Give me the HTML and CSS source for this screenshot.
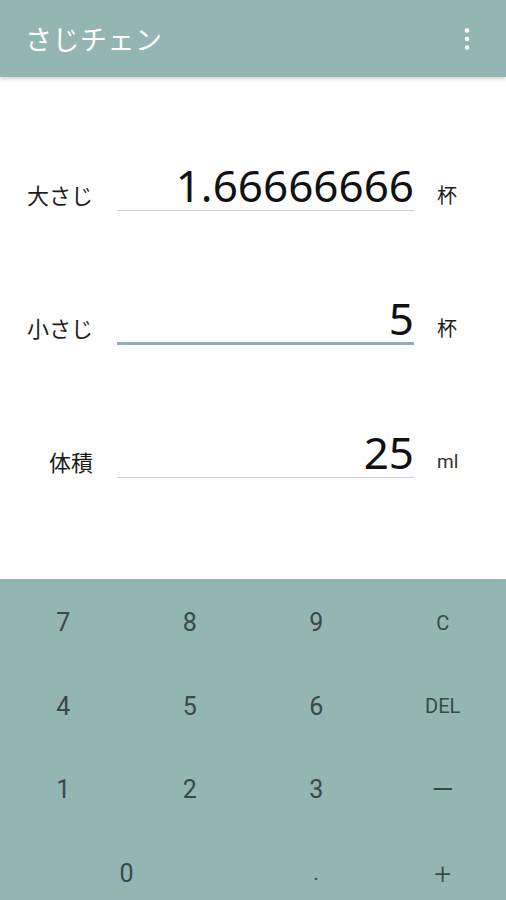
FILE: index.html
```html
<!DOCTYPE html>
<html lang="ja">
<head>
<meta charset="utf-8">
<title>さじチェン</title>
<link rel="stylesheet" href="styles.css">
</head>
<body>
<div class="app">
  <header class="appbar">
    <h1 class="title">さじチェン</h1>
    <svg class="menu" width="8" height="26" viewBox="0 0 8 26">
      <circle cx="4" cy="4.5" r="2.3" fill="#fff"/>
      <circle cx="4" cy="13" r="2.3" fill="#fff"/>
      <circle cx="4" cy="21.5" r="2.3" fill="#fff"/>
    </svg>
  </header>
  <main class="form">
    <div class="row">
      <span class="label">大さじ</span>
      <div class="field">1.66666666</div>
      <span class="unit">杯</span>
    </div>
    <div class="row">
      <span class="label">小さじ</span>
      <div class="field focused">5</div>
      <span class="unit">杯</span>
    </div>
    <div class="row">
      <span class="label">体積</span>
      <div class="field">25</div>
      <span class="unit latin">ml</span>
    </div>
  </main>
  <section class="keypad">
    <div class="key">7</div>
    <div class="key">8</div>
    <div class="key">9</div>
    <div class="key small">C</div>
    <div class="key">4</div>
    <div class="key">5</div>
    <div class="key">6</div>
    <div class="key small">DEL</div>
    <div class="key">1</div>
    <div class="key">2</div>
    <div class="key">3</div>
    <div class="key minus">—</div>
    <div class="key wide">0</div>
    <div class="key dot">.</div>
    <div class="key plus">+</div>
  </section>
</div>
</body>
</html>
```
FILE: styles.css
```css
html, body {
  margin: 0;
  padding: 0;
  background: #ffffff;
}
body {
  width: 506px;
  height: 900px;
  overflow: hidden;
  font-family: Roboto, "Noto Sans CJK JP", sans-serif;
}
.app {
  display: flex;
  flex-direction: column;
  height: 900px;
}
.appbar {
  position: relative;
  z-index: 2;
  height: 77px;
  flex: none;
  background: #93b5b4;
  display: flex;
  align-items: center;
  justify-content: space-between;
  padding: 0 35px 0 25px;
  box-shadow: 0 2px 4px rgba(0, 0, 0, 0.18);
}
.title {
  margin: 0;
  font-family: "Noto Sans CJK JP", sans-serif;
  font-weight: 400;
  font-size: 27px;
  line-height: 36px;
  color: #ffffff;
  letter-spacing: 0.5px;
}
.menu {
  display: block;
}
.form {
  height: 502px;
  flex: none;
  display: flex;
  flex-direction: column;
}
.row {
  height: 133.5px;
  flex: none;
  display: flex;
  align-items: flex-end;
}
.label {
  width: 93px;
  flex: none;
  text-align: right;
  font-family: "Noto Sans CJK JP", sans-serif;
  font-size: 22px;
  line-height: 28px;
  color: #1c1c1c;
  margin-right: 24px;
  margin-bottom: 3px;
}
.field {
  width: 297px;
  flex: none;
  box-sizing: border-box;
  text-align: right;
  font-family: "Noto Sans", sans-serif;
  font-size: 44px;
  line-height: 48px;
  color: #111111;
  padding-bottom: 1px;
  border-bottom: 1px solid #cfcfcf;
}
.field.focused {
  border-bottom: 3px solid #8cb2b1;
  padding-bottom: 0;
  margin-bottom: -1px;
}
.unit {
  margin-left: 23px;
  margin-bottom: 2px;
  font-family: "Noto Sans CJK JP", sans-serif;
  font-size: 20px;
  line-height: 28px;
  color: #1c1c1c;
}
.unit.latin {
  font-family: Roboto, sans-serif;
  font-size: 19px;
  color: #333333;
}
.keypad {
  flex: 1;
  background: #93b5b4;
  display: grid;
  grid-template-columns: repeat(4, 1fr);
  grid-auto-rows: 83.5px;
  padding-top: 2px;
}
.key {
  display: flex;
  align-items: center;
  justify-content: center;
  font-family: Roboto, sans-serif;
  font-size: 25px;
  color: #3a4848;
}
.key.small {
  font-size: 20px;
}
.key.minus {
  font-size: 28px;
}
.key.plus {
  font-size: 30px;
  font-weight: 300;
}
.key.dot {
  font-size: 20px;
}
.key.wide {
  grid-column: span 2;
}
```
